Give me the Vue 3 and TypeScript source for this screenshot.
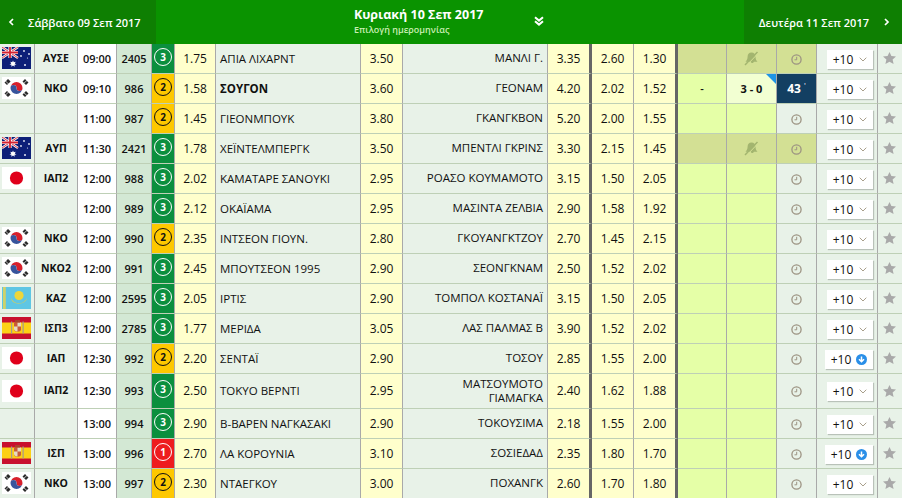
<script setup lang="ts">
type Row = {
  flag: string; lg: string; time: string; code: string; lvl: number; o1: string; home: string; x: string;
  away: string; o2: string; a: string; b: string; bold?: boolean; muted?: boolean; live?: boolean; tall?: boolean; up?: boolean;
};
const rows: Row[] = [
  { flag: 'au', lg: 'ΑΥΣΕ', time: '09:00', code: '2405', lvl: 3, o1: '1.75', home: 'ΑΠΙΑ ΛΙΧΑΡΝΤ', x: '3.50', away: 'ΜΑΝΛΙ Γ.', o2: '3.35', a: '2.60', b: '1.30', muted: true },
  { flag: 'kr', lg: 'ΝΚΟ', time: '09:10', code: '986', lvl: 2, o1: '1.58', home: 'ΣΟΥΓΟΝ', x: '3.60', away: 'ΓΕΟΝΑΜ', o2: '4.20', a: '2.02', b: '1.52', bold: true, live: true },
  { flag: '', lg: '', time: '11:00', code: '987', lvl: 2, o1: '1.45', home: 'ΓΙΕΟΝΜΠΟΥΚ', x: '3.80', away: 'ΓΚΑΝΓΚΒΟΝ', o2: '5.20', a: '2.00', b: '1.55' },
  { flag: 'au', lg: 'ΑΥΠ', time: '11:30', code: '2421', lvl: 3, o1: '1.78', home: 'ΧΕΪΝΤΕΛΜΠΕΡΓΚ', x: '3.50', away: 'ΜΠΕΝΤΛΙ ΓΚΡΙΝΣ', o2: '3.30', a: '2.15', b: '1.45', muted: true },
  { flag: 'jp', lg: 'ΙΑΠ2', time: '12:00', code: '988', lvl: 3, o1: '2.02', home: 'ΚΑΜΑΤΑΡΕ ΣΑΝΟΥΚΙ', x: '2.95', away: 'ΡΟΑΣΟ ΚΟΥΜΑΜΟΤΟ', o2: '3.15', a: '1.50', b: '2.05' },
  { flag: '', lg: '', time: '12:00', code: '989', lvl: 3, o1: '2.12', home: 'ΟΚΑΪΑΜΑ', x: '2.95', away: 'ΜΑΣΙΝΤΑ ΖΕΛΒΙΑ', o2: '2.90', a: '1.58', b: '1.92' },
  { flag: 'kr', lg: 'ΝΚΟ', time: '12:00', code: '990', lvl: 2, o1: '2.35', home: 'ΙΝΤΣΕΟΝ ΓΙΟΥΝ.', x: '2.80', away: 'ΓΚΟΥΑΝΓΚΤΖΟΥ', o2: '2.70', a: '1.45', b: '2.15' },
  { flag: 'kr', lg: 'ΝΚΟ2', time: '12:00', code: '991', lvl: 3, o1: '2.45', home: 'ΜΠΟΥΤΣΕΟΝ 1995', x: '2.90', away: 'ΣΕΟΝΓΚΝΑΜ', o2: '2.50', a: '1.52', b: '2.02' },
  { flag: 'kz', lg: 'ΚΑΖ', time: '12:00', code: '2595', lvl: 3, o1: '2.05', home: 'ΙΡΤΙΣ', x: '2.90', away: 'ΤΟΜΠΟΛ ΚΟΣΤΑΝΑΪ', o2: '3.15', a: '1.50', b: '2.05' },
  { flag: 'es', lg: 'ΙΣΠ3', time: '12:00', code: '2785', lvl: 3, o1: '1.77', home: 'ΜΕΡΙΔΑ', x: '3.05', away: 'ΛΑΣ ΠΑΛΜΑΣ Β', o2: '3.90', a: '1.52', b: '2.02' },
  { flag: 'jp', lg: 'ΙΑΠ', time: '12:30', code: '992', lvl: 2, o1: '2.20', home: 'ΣΕΝΤΑΪ', x: '2.90', away: 'ΤΟΣΟΥ', o2: '2.85', a: '1.55', b: '2.00', up: true },
  { flag: 'jp', lg: 'ΙΑΠ2', time: '12:30', code: '993', lvl: 3, o1: '2.50', home: 'ΤΟΚΥΟ ΒΕΡΝΤΙ', x: '2.95', away: 'ΜΑΤΣΟΥΜΟΤΟ ΓΙΑΜΑΓΚΑ', o2: '2.40', a: '1.62', b: '1.88', tall: true },
  { flag: '', lg: '', time: '13:00', code: '994', lvl: 3, o1: '2.90', home: 'Β-ΒΑΡΕΝ ΝΑΓΚΑΣΑΚΙ', x: '2.90', away: 'ΤΟΚΟΥΣΙΜΑ', o2: '2.18', a: '1.55', b: '2.00' },
  { flag: 'es', lg: 'ΙΣΠ', time: '13:00', code: '996', lvl: 1, o1: '2.70', home: 'ΛΑ ΚΟΡΟΥΝΙΑ', x: '3.10', away: 'ΣΟΣΙΕΔΑΔ', o2: '2.35', a: '1.80', b: '1.70', up: true },
  { flag: 'kr', lg: 'ΝΚΟ', time: '13:00', code: '997', lvl: 2, o1: '2.30', home: 'ΝΤΑΕΓΚΟΥ', x: '3.00', away: 'ΠΟΧΑΝΓΚ', o2: '2.60', a: '1.70', b: '1.80' },
];
</script>

<template>
  <div class="page">
    <header class="top">
      <div class="side left">
        <svg class="arrow" width="6" height="8" viewBox="0 0 6 8"><path d="M5 1 2 4l3 3" fill="none" stroke="#fff" stroke-width="1.700" /></svg>
        <span>Σάββατο 09 Σεπ 2017</span>
      </div>
      <div class="mid">
        <div class="mid-text">
          <div class="day">Κυριακή 10 Σεπ 2017</div>
          <div class="pick">Επιλογή ημερομηνίας</div>
        </div>
        <svg class="chev" width="10" height="10" viewBox="0 0 10 10"><path d="M1 1.200 5 4.600l4-3.400M1 5.200 5 8.600l4-3.400" fill="none" stroke="#fff" stroke-width="2" /></svg>
      </div>
      <div class="side right">
        <span>Δευτέρα 11 Σεπ 2017</span>
        <svg class="arrow" width="6" height="8" viewBox="0 0 6 8"><path d="M1 1l3 3-3 3" fill="none" stroke="#fff" stroke-width="1.700" /></svg>
      </div>
    </header>

    <table class="grid">
      <colgroup>
        <col class="w35" /><col class="w43" /><col class="w39" /><col class="w35" />
        <col class="w23" /><col class="w41" /><col class="w145" /><col class="w42" />
        <col class="w145" /><col class="w44" /><col class="w42" /><col class="w44" />
        <col class="w49" /><col class="w50" /><col class="w40" /><col class="w61" /><col class="w24" />
      </colgroup>
      <tbody>
        <tr v-for="r in rows" :key="r.code" :class="{ tall: r.tall }">
          <td class="c-flag">
            <svg v-if="r.flag" class="flag" width="29" height="22" viewBox="0 0 29 22">
              <template v-if="r.flag === 'au'">
                <rect width="29" height="22" fill="#0d1f78" />
                <path d="M0 0l16 11M16 0 0 11" stroke="#fff" stroke-width="2.400" />
                <path d="M0 0l16 11M16 0 0 11" stroke="#d2202f" stroke-width=".9" />
                <path d="M8 0v11M0 5.500h16" stroke="#fff" stroke-width="3.200" />
                <path d="M8 0v11M0 5.500h16" stroke="#d2202f" stroke-width="1.800" />
                <path d="M11 13.500l.8 1.800 1.900-.6-.9 1.800 1.700 1-2 .3.200 2-1.700-1.300-1.700 1.300.200-2-2-.3 1.700-1-.9-1.800 1.900.6z" fill="#fff" />
                <circle cx="22" cy="4" r=".9" fill="#e8eaf5" /><circle cx="27" cy="7" r=".9" fill="#e8eaf5" />
                <circle cx="19" cy="9" r=".9" fill="#e8eaf5" /><circle cx="23" cy="18" r="1" fill="#e8eaf5" />
                <circle cx="25.500" cy="11" r=".6" fill="#e8eaf5" />
              </template>
              <template v-else-if="r.flag === 'kr'">
                <rect width="29" height="22" fill="#fff" />
                <path d="M8.500 11a6 6 0 0 1 12 0 3 3 0 0 1-6 0 3 3 0 0 0-6 0z" fill="#d8202c" />
                <path d="M8.500 11a3 3 0 0 1 6 0 3 3 0 0 0 6 0 6 6 0 0 1-12 0z" fill="#38549c" />
                <path d="M2.500 5.500 6 2l2.600 2.400L5 8zM20.500 4.400 23 2l3.500 3.500L24 8zM2.500 16.500 5 14l3.600 3.600L6 20zM20.500 17.600 24 14l2.500 2.500L23 20z" fill="#2a2a2a" />
                <path d="M3.500 4 8 8.500M21 7 25.500 3M3.500 18 8 13.500M21 15l4.500 4" stroke="#fff" stroke-width=".7" />
              </template>
              <template v-else-if="r.flag === 'jp'">
                <rect width="29" height="22" fill="#fff" />
                <circle cx="14.500" cy="11" r="6.600" fill="#e0001b" />
              </template>
              <template v-else-if="r.flag === 'kz'">
                <rect width="29" height="22" fill="#5fc6e4" />
                <rect x="1" width="2.800" height="22" fill="#cfd26a" />
                <circle cx="17" cy="8.500" r="4.600" fill="#eed63a" />
                <path d="M9 11c3 7 13 7 16 0-1 7-15 8-16 0z" fill="#e4cf4a" />
              </template>
              <template v-else>
                <rect width="29" height="22" fill="#c8102e" />
                <rect y="5.500" width="29" height="11" fill="#fcd116" />
                <rect x="9" y="4.500" width="1.200" height="12" fill="#a39a90" /><rect x="20.500" y="4.500" width="1.200" height="12" fill="#a39a90" />
                <path d="M12 5.500h7v7c0 3-7 3-7 0z" fill="#c95b3a" />
                <path d="M15.500 5.500H19v4h-3.500zM12 9.500h3.500v5c-2-.3-3.500-1-3.500-2.500z" fill="#e6dcc0" />
                <rect x="13" y="3" width="5" height="2.500" fill="#a8432c" />
              </template>
            </svg>
          </td>
          <td class="c-lg">{{ r.lg }}</td>
          <td class="c-time">{{ r.time }}</td>
          <td class="c-code">{{ r.code }}</td>
          <td class="c-lvl" :class="'lvl' + r.lvl"><span class="ring">{{ r.lvl }}</span></td>
          <td class="odd">{{ r.o1 }}</td>
          <td class="team" :class="{ strong: r.bold }">{{ r.home }}</td>
          <td class="odd">{{ r.x }}</td>
          <td class="team away">{{ r.away }}</td>
          <td class="odd thick">{{ r.o2 }}</td>
          <td class="odd">{{ r.a }}</td>
          <td class="odd thick">{{ r.b }}</td>
          <td class="st" :class="{ muted: r.muted }">{{ r.live ? '-' : '' }}</td>
          <td class="st" :class="{ muted: r.muted, score: r.live }">
            <template v-if="r.live">3 - 0<i class="corner"></i></template>
            <svg v-else-if="r.muted" class="bell" width="17" height="15" viewBox="0 0 17 15">
              <path d="M8.500 1.500c-2.600 0-3.900 2-3.900 4.200 0 2.300-.8 3.600-2.100 5h5.200c.6 1.800 2.600 1.800 3.200 0h3.600c-1.200-1.300-2-2.700-2-5 0-2.200-1.400-4.200-4-4.200z" fill="#a3b56f" />
              <path d="M14.500 1 2 14" stroke="#a3b56f" stroke-width="1.500" />
              <path d="M15.500 2 3 15" stroke="#d3e094" stroke-width="1" />
            </svg>
          </td>
          <td class="clk" :class="{ muted: r.muted, now: r.live }">
            <template v-if="r.live">43 <sup>'</sup></template>
            <svg v-else width="11" height="11" viewBox="0 0 11 11">
              <circle cx="5.500" cy="5.500" r="4.600" fill="none" stroke="#9c9382" stroke-width="1.300" />
              <path d="M5.700 2.800v3H3.500" fill="none" stroke="#9c9382" stroke-width="1" />
            </svg>
          </td>
          <td class="c-more">
            <span class="more" :class="{ up: r.up }">+10
              <svg v-if="r.up" width="11" height="11" viewBox="0 0 11 11"><circle cx="5.500" cy="5.500" r="5.500" fill="#2a8fe8" /><path d="M5.500 2.500v5M3 5.300l2.500 2.500L8 5.300" fill="none" stroke="#fff" stroke-width="1.500" /></svg>
              <svg v-else width="8" height="5" viewBox="0 0 8 5"><path d="M.7.7 4 4l3.300-3.300" fill="none" stroke="#a89f8b" stroke-width="1" /></svg>
            </span>
          </td>
          <td class="c-star">
            <svg class="star" width="13" height="12" viewBox="0 0 13 12"><path d="M6.500 0l1.900 4.100 4.600.5-3.400 3 1 4.400-4.100-2.300L2.400 12l1-4.400-3.400-3 4.600-.5z" fill="#a9a9a9" /></svg>
          </td>
        </tr>
      </tbody>
    </table>
  </div>
</template>

<style>
html, body { margin: 0; background: #fff; }
</style>

<style scoped>
.page { width: 902px; height: 498px; overflow: hidden; font-family: "Open Sans", "Noto Sans", sans-serif; color: #111; }
.top { display: flex; height: 44px; background: #0a9300; color: #fff; }
.side { width: 156px; background: #0e7f02; display: flex; align-items: center; font-size: 11px; font-weight: 600; gap: 14px; padding-left: 8px; box-sizing: border-box; }
.side.right { width: 158px; justify-content: flex-end; padding-left: 0; padding-right: 12px; gap: 15px; }
.arrow { flex: none; }
.mid { flex: 1; display: flex; align-items: center; padding-left: 198px; }
.mid-text { width: 180px; margin-top: -1px; }
.day { font-size: 12.500px; font-weight: 700; line-height: 16px; }
.pick { font-size: 9px; font-weight: 600; color: #c9eeb4; line-height: 13px; }
.chev { margin-top: -3px; }
.grid { border-collapse: separate; border-spacing: 0; table-layout: fixed; width: 902px; font-size: 12px; font-weight: 400; }
.w23 { width: 23px; } .w24 { width: 24px; } .w35 { width: 35px; } .w39 { width: 39px; } .w40 { width: 40px; }
.w41 { width: 41px; } .w42 { width: 42px; } .w43 { width: 43px; } .w44 { width: 44px; } .w49 { width: 49px; }
.w50 { width: 50px; } .w61 { width: 61px; } .w145 { width: 145px; }
.grid td { height: 28px; padding: 0 0 1px; text-align: center; border-bottom: 1px solid #bed0b6; border-right: 1px solid #a9a9a9; box-sizing: content-box; line-height: 15px; vertical-align: middle; }
.grid tr.tall td { height: 33px; }
.c-flag, .c-lg, .team, .clk, .c-more, .c-star { background: #e8f2e8; }
.flag { display: block; margin: 0 0 0 2px; }
.c-lg { font-size: 10.500px; font-weight: 700; }
.c-time { background: #fff; font-weight: 600; font-size: 11px; }
.c-code { background: #d3e8d4; font-weight: 600; font-size: 11px; }
.c-lvl { font-size: 0; }
.lvl3 { background: #0b8f3e; color: #fff; }
.lvl2 { background: #fec800; color: #111; }
.lvl1 { background: #ee1c1e; color: #fff; }
.ring { display: inline-flex; align-items: center; justify-content: center; width: 16px; height: 16px; border-radius: 50%; border: 1px solid currentColor; font-size: 10px; font-weight: 700; line-height: 1; }
.odd { background: #ffffcc; }
.grid td.team { text-align: left; padding-left: 4px; padding-right: 4px; font-size: 11.500px; width: auto; }
.grid td.team.away { text-align: right; line-height: 14px; }
.grid td.strong { font-weight: 700; }
.grid td.thick { border-right: 3px solid #666; }
.st { background: #e5ffa7; font-weight: 600; font-size: 11px; position: relative; }
.grid td.muted { background: #d3e094; }
.grid td.score { background: #f2ffd2; font-weight: 700; }
.corner { position: absolute; right: 0; top: 0; border-top: 10px solid #1e94e6; border-left: 10px solid transparent; }
.grid td.now { background: #133f62; color: #fff; font-weight: 700; }
.now sup { font-size: 8px; font-weight: 400; line-height: 0; }
.grid td.c-more { text-align: left; padding-left: 10px; width: auto; }
.more { display: inline-flex; align-items: center; justify-content: center; gap: 6px; width: 46px; height: 19px; margin-top: 2px; background: #fff; box-shadow: 1px 1px 1px #b9c2b9; font-size: 12px; box-sizing: border-box; }
.more.up { width: 48px; margin-left: -2px; gap: 5px; }
.clk svg, .st svg { vertical-align: middle; }
.star { display: block; margin-left: 5px; }
.grid td.c-star { border-right: 0; }
</style>
